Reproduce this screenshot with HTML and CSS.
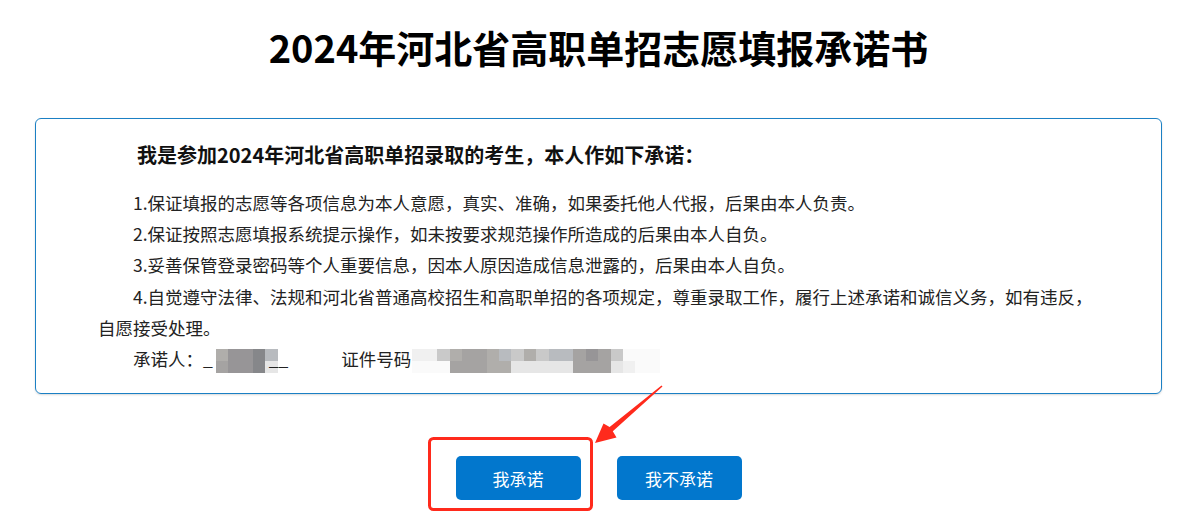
FILE: index.html
```html
<!DOCTYPE html>
<html lang="zh-CN">
<head>
    <meta charset="UTF-8">
    <meta name="viewport" content="width=device-width, initial-scale=1.0">
    <title>2024年河北省高职单招志愿填报承诺书</title>
    <link rel="stylesheet" href="styles.css">
</head>
<body>
    <div class="page">
        <h1 class="title">2024年河北省高职单招志愿填报承诺书</h1>

        <div class="promise-box">
            <p class="lead">我是参加2024年河北省高职单招录取的考生，本人作如下承诺：</p>
            <p class="item">1.保证填报的志愿等各项信息为本人意愿，真实、准确，如果委托他人代报，后果由本人负责。</p>
            <p class="item">2.保证按照志愿填报系统提示操作，如未按要求规范操作所造成的后果由本人自负。</p>
            <p class="item">3.妥善保管登录密码等个人重要信息，因本人原因造成信息泄露的，后果由本人自负。</p>
            <p class="item">4.自觉遵守法律、法规和河北省普通高校招生和高职单招的各项规定，尊重录取工作，履行上述承诺和诚信义务，如有违反，自愿接受处理。</p>
            <p class="item sign">承诺人：_<span class="mosaic name">
                    <i class="m4"></i><i class="m3"></i>
                    <i class="m2"></i><i class="m2"></i>
                    <i class="m2"></i><i class="m2"></i>
                    <i class="m1"></i><i class="m1"></i>
                    <i class="m5"></i><i class="m7"></i>
                </span>__<span class="spacer"></span>证件号码<span class="mosaic idno">
                    <i class="m8"></i><i class="m9"></i>
                    <i class="m8"></i><i class="m9"></i>
                    <i class="m6"></i><i class="m9"></i>
                    <i class="m4"></i><i class="m3"></i>
                    <i class="m3"></i><i class="m3"></i>
                    <i class="m3"></i><i class="m3"></i>
                    <i class="m4"></i><i class="m4"></i>
                    <i class="m5"></i><i class="m4"></i>
                    <i class="m6"></i><i class="m7"></i>
                    <i class="m4"></i><i class="m7"></i>
                    <i class="m6"></i><i class="m7"></i>
                    <i class="m5"></i><i class="m7"></i>
                    <i class="m5"></i><i class="m7"></i>
                    <i class="m3"></i><i class="m3"></i>
                    <i class="m2"></i><i class="m3"></i>
                    <i class="m3"></i><i class="m3"></i>
                    <i class="m6"></i><i class="m7"></i>
                    <i class="m9"></i><i class="m8"></i>
                    <i class="m9"></i><i class="m9"></i>
                    <i class="m9"></i><i class="m9"></i>
                </span></p>
        </div>

        <div class="actions">
            <button class="btn">我承诺</button>
            <button class="btn">我不承诺</button>
        </div>

        <!-- red annotation drawn over the page -->
        <svg class="mark" width="1189" height="527" viewBox="0 0 1189 527">
            <rect x="429.5" y="438.5" width="162" height="71" rx="4" fill="none" stroke="#ff2a1c" stroke-width="3"/>
            <polygon fill="#ff2a1c" points="662.5,386.5 612.8,431.2 616.5,437.5 595,443 603.5,423.5 609.6,426.9 661.5,385.6"/>
        </svg>
    </div>
</body>
</html>
```

FILE: styles.css
```css
body {
    margin: 0;
    font-family: "Noto Sans CJK SC", "Noto Sans", sans-serif;
    color: #222;
    background-color: #fff;
}
.page {
    position: relative;
    width: 1189px;
    height: 527px;
    padding: 0 27px 0 35px;
    box-sizing: border-box;
    overflow: hidden;
}
.title {
    margin: 22px 0 46px;
    font-size: 38px;
    line-height: 50px;
    font-weight: bold;
    text-align: center;
    color: #000;
}
.promise-box {
    padding: 21px 54px 19px 62px;
    border: 1px solid #1b80c4;
    border-radius: 6px;
    box-shadow: 0 1px 2px rgba(0,0,0,0.15);
}
.promise-box p {
    margin: 0;
}
.lead {
    font-size: 20px;
    line-height: 30px;
    font-weight: bold;
    text-indent: 1.95em;
    color: #111;
    margin-bottom: 17px !important;
}
.item {
    font-size: 17.5px;
    line-height: 31.2px;
    text-indent: 2em;
}
.mosaic {
    display: inline-grid;
    grid-template-rows: repeat(2, 12px);
    grid-auto-flow: column;
    grid-auto-columns: 12.4px;
    vertical-align: middle;
    text-indent: 0;
}
.mosaic.name {
    margin: 0 -9px 0 3px;
}
.mosaic.idno {
    margin-left: 1px;
}
.mosaic i {
    display: block;
}
.m1 { background-color: #86878a; }
.m2 { background-color: #979597; }
.m3 { background-color: #a5a3a2; }
.m4 { background-color: #b0aeab; }
.m5 { background-color: #b8bbbf; }
.m6 { background-color: #c9c9c9; }
.m7 { background-color: #e6e6e6; }
.m8 { background-color: #f0f0f0; }
.m9 { background-color: #fafafa; }
.spacer {
    display: inline-block;
    width: 53px;
}
.actions {
    display: flex;
    justify-content: center;
    gap: 36px;
    margin-top: 62px;
}
.btn {
    width: 125px;
    height: 44px;
    border: none;
    border-radius: 5px;
    background-color: #0277cd;
    color: #fff;
    font-family: "Noto Sans CJK SC", sans-serif;
    font-size: 17px;
    cursor: pointer;
}
.btn:hover {
    background-color: #0566b0;
}
.mark {
    position: absolute;
    top: 0;
    left: 0;
    pointer-events: none;
}
```
